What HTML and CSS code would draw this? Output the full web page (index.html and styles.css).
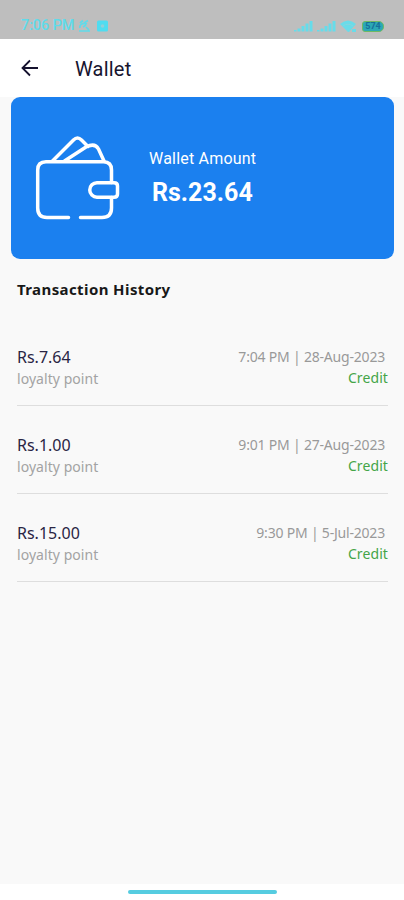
FILE: index.html
```html
<!DOCTYPE html>
<html lang="en">
<head>
    <meta charset="utf-8">
    <meta name="viewport" content="width=device-width, initial-scale=1">
    <title>Wallet</title>
    <link rel="stylesheet" href="styles.css">
</head>
<body>
    <!-- Phone status bar -->
    <div class="status-bar">
        <span class="clock">7:06 PM</span>
        <svg class="alarm" width="13" height="14" viewBox="0 0 13 14">
            <path d="M2 4L5 1.500M6 4L10 1.500M9 5C5 3 1 6 2 9M1 12H12M5 8L8 6M8 8L11 11" />
        </svg>
        <svg class="app" width="12" height="12" viewBox="0 0 12 12">
            <rect x="0" y="0.500" width="11" height="11" rx="1.500" />
            <circle cx="5.500" cy="6" r="1.800" />
        </svg>
        <svg class="signal" width="19" height="12" viewBox="0 0 19 12">
            <path d="M1 11.500V10M5 11.500V8.500M9 11.500V6M13 11.500V3.500M17 11.500V1" />
        </svg>
        <svg class="signal second" width="19" height="12" viewBox="0 0 19 12">
            <path d="M1 11.500V10M5 11.500V8.500M9 11.500V6M13 11.500V3.500M17 11.500V1" />
        </svg>
        <svg class="wifi" width="17" height="13" viewBox="0 0 17 13">
            <path d="M0 4Q8 -3 16 4L9 12H8Z" />
            <path class="cut" d="M3 6Q8 2.500 13 6" />
            <path d="M12 9H16V12H12Z" />
        </svg>
        <span class="battery">574</span>
    </div>

    <div class="header">
        <svg width="18" height="18" viewBox="0 0 18 18">
            <path d="M17 9H2M9 1.500L1.500 9L9 16.500" />
        </svg>
        <h1>Wallet</h1>
    </div>

    <div class="content">
        <div class="card">
            <svg class="wallet" width="86" height="86" viewBox="0 0 86 86">
                <path d="M33.500 82.500H12Q2.700 82.500 2.700 73V35Q2.700 26.700 11 26.700H68.500Q76.500 26.700 76.500 35V47.500M76.500 62.500V73Q76.500 82.500 67 82.500H45.500" />
                <path d="M82.500 51V59Q82.500 62.200 79 62.200H62A7.200 7.200 0 0 1 62 47.700H79Q82.500 47.700 82.500 51Z" />
                <path d="M17.500 26L38.500 5Q42.500 1 46.500 5L53 11.500M29.500 26L51 12Q60 7.500 63.500 14L69 26" />
            </svg>
            <div class="amount">
                <div class="amount-label">Wallet Amount</div>
                <div class="amount-value">Rs.23.64</div>
            </div>
        </div>

        <h2>Transaction History</h2>

        <div class="row">
            <div class="left">
                <div class="price">Rs.7.64</div>
                <div class="note">loyalty point</div>
            </div>
            <div class="right">
                <div class="date">7:04 PM | 28-Aug-2023</div>
                <div class="type">Credit</div>
            </div>
        </div>
        <div class="row">
            <div class="left">
                <div class="price">Rs.1.00</div>
                <div class="note">loyalty point</div>
            </div>
            <div class="right">
                <div class="date">9:01 PM | 27-Aug-2023</div>
                <div class="type">Credit</div>
            </div>
        </div>
        <div class="row">
            <div class="left">
                <div class="price">Rs.15.00</div>
                <div class="note">loyalty point</div>
            </div>
            <div class="right">
                <div class="date">9:30 PM | 5-Jul-2023</div>
                <div class="type">Credit</div>
            </div>
        </div>
    </div>

    <div class="nav-bar">
        <div class="handle"></div>
    </div>
</body>
</html>
```
FILE: styles.css
```css
* {
    box-sizing: border-box;
}

body {
    margin: 0;
    height: 900px;
    display: flex;
    flex-direction: column;
    background: #fff;
    font-family: "Noto Sans", sans-serif;
}

svg {
    fill: none;
    flex-shrink: 0;
}

/* Status bar */
.status-bar {
    height: 39px;
    padding: 13px 20px 0 21px;
    display: flex;
    align-items: center;
    background: #bebebe;
    color: #5fdbea;
}

.clock {
    width: 54px;
    font: 500 14.5px/24px Roboto, sans-serif;
    letter-spacing: -0.1px;
    white-space: nowrap;
}

.alarm {
    margin-left: 3px;
    stroke: #5fdbea;
    stroke-width: 1.7;
}

.app {
    margin-left: 6px;
    fill: #4fdcf0;
}

.app circle {
    fill: #8fd0da;
}

.signal {
    margin-left: auto;
    stroke: #66dcea;
    stroke-width: 3;
}

.second {
    margin-left: 4px;
}

.wifi {
    margin-left: 4px;
    fill: #69dce9;
}

.wifi .cut {
    fill: none;
    stroke: #86d5df;
}

.battery {
    width: 22px;
    height: 11px;
    margin-left: 5px;
    border: 1px solid #6fb963;
    border-radius: 3px 5px 5px 3px;
    background: #2ba8b5;
    color: #176f9b;
    font: bold 9px/9px Roboto, sans-serif;
    text-align: center;
}

/* Title bar */
.header {
    height: 58px;
    padding-left: 21px;
    display: flex;
    align-items: center;
}

.header svg {
    stroke: #15122e;
    stroke-width: 1.8;
}

h1 {
    margin: 2px 0 0 36px;
    color: #17142f;
    font: 20px/24px Roboto, sans-serif;
    letter-spacing: 0.2px;
}

.content {
    flex: 1;
    padding: 0 10px 0 11px;
    background: #f9f9f9;
}

/* Balance card */
.card {
    height: 162px;
    padding-left: 24px;
    display: flex;
    align-items: center;
    background: #1b80ef;
    border-radius: 9px;
    color: #fff;
}

.wallet {
    stroke: #fff;
    stroke-width: 3.5;
    stroke-linecap: round;
    stroke-linejoin: round;
}

.amount {
    margin: 0 0 2px 28px;
    font-family: Roboto, sans-serif;
}

.amount-label {
    font-size: 16px;
    line-height: 32px;
    letter-spacing: 0.2px;
}

.amount-value {
    padding-left: 3px;
    font-size: 25px;
    font-weight: bold;
    line-height: 36px;
}

h2 {
    margin: 18px 0 17px 6px;
    color: #181818;
    font-size: 15px;
    font-weight: bold;
    line-height: 24px;
    letter-spacing: 0.4px;
}

/* Transactions */
.row {
    height: 88px;
    margin: 0 6px;
    padding-top: 28px;
    display: flex;
    justify-content: space-between;
    border-bottom: 1px solid #dedede;
}

.price {
    color: #292544;
    font-size: 16px;
    line-height: 22px;
}

.note {
    color: #a3a3a3;
    font-size: 14px;
    line-height: 22px;
    letter-spacing: 0.05px;
}

.right {
    text-align: right;
}

.date {
    padding-right: 3px;
    color: #999;
    font-size: 14px;
    line-height: 21px;
    letter-spacing: -0.2px;
}

.type {
    color: #44a548;
    font-size: 14px;
    line-height: 22px;
    letter-spacing: 0.1px;
}

/* Gesture bar */
.nav-bar {
    height: 16px;
    padding-top: 6px;
}

.handle {
    width: 149px;
    height: 4px;
    margin-left: 128px;
    border-radius: 2px;
    background: #55cce0;
}
```
